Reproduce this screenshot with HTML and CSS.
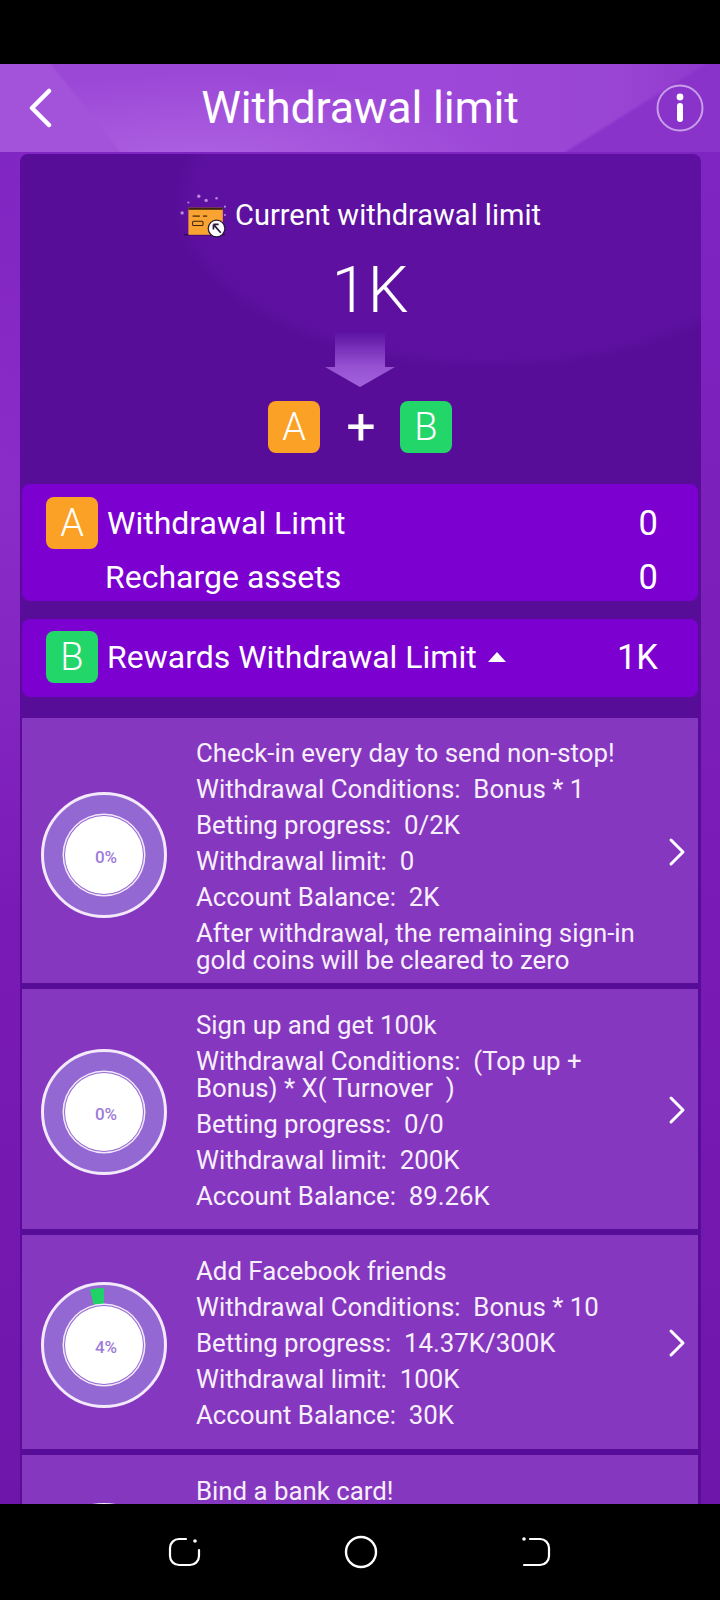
FILE: index.html
```html
<!DOCTYPE html>
<html lang="en">
<head>
    <meta charset="UTF-8">
    <meta name="viewport" content="width=device-width, initial-scale=1.0">
    <title>Withdrawal limit</title>
    <link rel="stylesheet" href="styles.css">
</head>
<body>

    <div class="status-bar"></div>

    <main class="app">
        <!-- Title bar -->
        <header class="top-bar">
            <svg class="back-icon" width="26" height="40" viewBox="0 0 26 40">
                <path d="M22 3 L5 20 L22 37" fill="none" stroke="#fff" stroke-width="4.5" stroke-linecap="round" stroke-linejoin="round"/>
            </svg>
            <h1 class="top-title">Withdrawal limit</h1>
            <div class="info-btn">
                <svg width="48" height="48" viewBox="0 0 48 48">
                    <circle cx="24" cy="24" r="22.5" fill="none" stroke="#e6cdf7" stroke-opacity="0.7" stroke-width="2"/>
                    <circle cx="24" cy="13" r="3.4" fill="#fff"/>
                    <rect x="21" y="19" width="6" height="19" rx="3" fill="#fff"/>
                </svg>
            </div>
        </header>

        <section class="panel">
            <!-- Total limit -->
            <div class="hero">
                <div class="hero-label">
                    <svg class="card-icon" width="48" height="46" viewBox="0 0 46 44">
                        <g fill="#b98ae0">
                            <circle cx="19" cy="4" r="1.6"/>
                            <circle cx="26" cy="8" r="1.6"/>
                            <circle cx="36" cy="6" r="1.2"/>
                            <circle cx="9" cy="10" r="1"/>
                            <circle cx="3" cy="20" r="1.6"/>
                            <circle cx="44" cy="14" r="1"/>
                            <circle cx="44" cy="22" r="1"/>
                        </g>
                        <path d="M5 41 H44" stroke="#1b0b2e" stroke-width="1"/>
                        <rect x="9" y="15" width="33" height="26" fill="#f9a332"/>
                        <rect x="9" y="15" width="33" height="2" fill="#3d2310"/>
                        <path d="M13 23 H20 M23 23 H27" stroke="#7a4a14" stroke-width="1.6"/>
                        <rect x="13" y="28" width="10" height="4" rx="1" fill="#f9a332" stroke="#3d2310"/>
                        <circle cx="36" cy="35" r="8" fill="#fff" stroke="#2a1838" stroke-width="1.2"/>
                        <path d="M33 31 L40 39 M33 31 V36 M33 31 H38" stroke="#2a1838" stroke-width="1.6" fill="none"/>
                    </svg>
                    <span>Current withdrawal limit</span>
                </div>
                <div class="hero-value">1K</div>
                <div class="hero-arrow">
                    <svg width="70" height="54" viewBox="0 0 70 54">
                        <defs>
                            <linearGradient id="arrowFill" x1="0" y1="0" x2="0" y2="1">
                                <stop offset="0" stop-color="#5e14a4"/>
                                <stop offset="0.6" stop-color="#9450d0"/>
                                <stop offset="1" stop-color="#a262dc"/>
                            </linearGradient>
                        </defs>
                        <path d="M10 0 H60 V34 H70 L35 54 L0 34 H10 Z" fill="url(#arrowFill)"/>
                    </svg>
                </div>
                <div class="hero-sum">
                    <span class="badge badge-a">A</span>
                    <span class="plus">+</span>
                    <span class="badge badge-b">B</span>
                </div>
            </div>

            <!-- A and B totals -->
            <div class="limit-row limit-row-a">
                <div class="limit-line">
                    <span class="badge badge-a">A</span>
                    <span class="limit-name">Withdrawal Limit</span>
                    <span class="limit-val">0</span>
                </div>
                <div class="limit-line limit-line-sub">
                    <span class="limit-name">Recharge assets</span>
                    <span class="limit-val">0</span>
                </div>
            </div>

            <div class="limit-row limit-row-b">
                <div class="limit-line">
                    <span class="badge badge-b">B</span>
                    <span class="limit-name">Rewards Withdrawal Limit</span>
                    <span class="caret"></span>
                    <span class="limit-val">1K</span>
                </div>
            </div>

            <!-- Reward tasks -->
            <div class="task task-first">
                <div class="ring" style="--p: 0deg"><div class="ring-core">0%</div></div>
                <div class="task-text">
                    <p>Check-in every day to send non-stop!</p>
                    <p>Withdrawal Conditions:&nbsp; Bonus * 1</p>
                    <p>Betting progress:&nbsp; 0/2K</p>
                    <p>Withdrawal limit:&nbsp; 0</p>
                    <p>Account Balance:&nbsp; 2K</p>
                    <p>After withdrawal, the remaining sign-in gold coins will be cleared to zero</p>
                </div>
                <svg class="chevron" width="18" height="30" viewBox="0 0 18 30"><path d="M3 3 L15 15 L3 27" fill="none" stroke="#fff" stroke-width="3" stroke-linecap="round" stroke-linejoin="round"/></svg>
            </div>

            <div class="task">
                <div class="ring" style="--p: 0deg"><div class="ring-core">0%</div></div>
                <div class="task-text">
                    <p>Sign up and get 100k</p>
                    <p>Withdrawal Conditions:&nbsp; (Top up + Bonus) * X( Turnover &nbsp;)</p>
                    <p>Betting progress:&nbsp; 0/0</p>
                    <p>Withdrawal limit:&nbsp; 200K</p>
                    <p>Account Balance:&nbsp; 89.26K</p>
                </div>
                <svg class="chevron" width="18" height="30" viewBox="0 0 18 30"><path d="M3 3 L15 15 L3 27" fill="none" stroke="#fff" stroke-width="3" stroke-linecap="round" stroke-linejoin="round"/></svg>
            </div>

            <div class="task">
                <div class="ring" style="--p: 14.4deg"><div class="ring-core">4%</div></div>
                <div class="task-text">
                    <p>Add Facebook friends</p>
                    <p>Withdrawal Conditions:&nbsp; Bonus * 10</p>
                    <p>Betting progress:&nbsp; 14.37K/300K</p>
                    <p>Withdrawal limit:&nbsp; 100K</p>
                    <p>Account Balance:&nbsp; 30K</p>
                </div>
                <svg class="chevron" width="18" height="30" viewBox="0 0 18 30"><path d="M3 3 L15 15 L3 27" fill="none" stroke="#fff" stroke-width="3" stroke-linecap="round" stroke-linejoin="round"/></svg>
            </div>

            <!-- Last card runs under the nav bar, only the top of it shows -->
            <div class="task task-last">
                <div class="ring" style="--p: 0deg"><div class="ring-core"></div></div>
                <div class="task-text">
                    <p>Bind a bank card!</p>
                </div>
            </div>
        </section>
    </main>

    <!-- Android navigation keys -->
    <nav class="nav-bar">
        <svg width="34" height="32" viewBox="0 0 34 32" fill="none" stroke="#fff" stroke-width="2.2" stroke-linecap="round">
            <path d="M19 3 H12 A9 9 0 0 0 3 12 V20 A9 9 0 0 0 12 29 H23 A9 9 0 0 0 32 20 V14"/>
            <circle cx="28" cy="5" r="1.8" fill="#fff" stroke="none"/>
        </svg>
        <svg width="34" height="34" viewBox="0 0 34 34" fill="none" stroke="#fff" stroke-width="2.4">
            <circle cx="17" cy="17" r="15"/>
        </svg>
        <svg width="32" height="32" viewBox="0 0 32 32" fill="none" stroke="#fff" stroke-width="2.2" stroke-linecap="round">
            <path d="M10 3 H20 A9 9 0 0 1 29 12 V20 A9 9 0 0 1 20 29 H4"/>
            <circle cx="4" cy="3" r="1.8" fill="#fff" stroke="none"/>
        </svg>
    </nav>

</body>
</html>
```

FILE: styles.css
```css
/* Page frame */
* {
    box-sizing: border-box;
}

html,
body {
    margin: 0;
    height: 1600px;
    overflow: hidden;
    background-color: #000;
    font-family: Roboto, "Liberation Sans", sans-serif;
    color: #fff;
}

body {
    display: flex;
    flex-direction: column;
}

.status-bar {
    height: 64px;
    flex-shrink: 0;
}

.app {
    flex: 1;
    min-height: 0;
    overflow: hidden;
    background:
        radial-gradient(ellipse 260px 420px at 0 420px, #8a2cc8 0, rgba(138, 44, 200, 0) 100%),
        linear-gradient(180deg, #7f26c2 0, #7a1ab6 60%, #6f16aa 100%);
}

.nav-bar {
    height: 96px;
    flex-shrink: 0;
    display: flex;
    justify-content: space-between;
    align-items: center;
    padding: 0 168px 0 167px;
}

/* Title bar */
.top-bar {
    height: 88px;
    display: flex;
    align-items: center;
    justify-content: space-between;
    padding: 0 13px 0 27px;
    background:
        linear-gradient(148deg, rgba(138, 51, 203, 0) 372px, #8a33cb 376px),
        linear-gradient(51.5deg, #a253da 0, #a253da 93px, rgba(162, 83, 218, 0) 96px),
        radial-gradient(ellipse 300px 90px at 200px 100px, #ae62e2 0, rgba(174, 98, 226, 0) 100%),
        linear-gradient(90deg, #9a48d6 0, #9d48d8 60%, #9a46d4 85%, #8e38cc 100%);
}

.back-icon {
    flex-shrink: 0;
}

.top-title {
    margin: 0;
    padding-left: 14px;
    font-size: 44.8px;
    font-weight: 400;
    line-height: 1;
    letter-spacing: -0.2px;
}

.info-btn {
    width: 54px;
    display: flex;
    justify-content: center;
}

/* Dark panel */
.panel {
    margin: 2px 19px 0 20px;
    padding: 0 3px 0 2px;
    border-radius: 8px 8px 0 0;
    height: 1400px;
    background:
        radial-gradient(ellipse 320px 166px at 470px 50px, #5e11a0 0, #5e11a0 92%, rgba(94, 17, 160, 0) 100%),
        #570d97;
}

.hero {
    height: 330px;
    padding-top: 38px;
    display: flex;
    flex-direction: column;
    align-items: center;
}

.hero-label {
    display: flex;
    align-items: center;
    gap: 8px;
    height: 46px;
    font-size: 29px;
    font-weight: 400;
}

.hero-value {
    margin-top: 17px;
    padding-left: 20px;
    font-size: 65px;
    font-weight: 300;
    line-height: 70px;
}

.hero-arrow {
    margin-top: 8px;
    height: 54px;
}

.hero-sum {
    margin-top: 14px;
    display: flex;
    align-items: center;
    gap: 24px;
}

.plus {
    width: 30px;
    margin-left: 2px;
    font-size: 52px;
    font-weight: 400;
    line-height: 52px;
    text-align: center;
}

.badge {
    width: 52px;
    height: 52px;
    flex-shrink: 0;
    border-radius: 8px;
    display: flex;
    align-items: center;
    justify-content: center;
    font-size: 38px;
    font-weight: 300;
}

.badge-a {
    background-color: #fba125;
}

.badge-b {
    background-color: #22d66a;
}

/* A and B rows */
.limit-row {
    background-color: #7c00d0;
    border-radius: 8px;
    padding: 0 40px 0 24px;
}

.limit-row-a {
    height: 117px;
    padding-top: 13px;
}

.limit-row-b {
    margin-top: 18px;
    height: 78px;
    padding-top: 12px;
}

.limit-line {
    display: flex;
    align-items: center;
    height: 52px;
    gap: 9px;
    font-size: 32px;
    font-weight: 400;
}

.limit-line-sub {
    height: 34px;
    margin-top: 11px;
    padding-left: 59px;
}

.limit-val {
    margin-left: auto;
    font-size: 34.5px;
}

.caret {
    width: 0;
    height: 0;
    margin-left: 2px;
    border-left: 9px solid transparent;
    border-right: 9px solid transparent;
    border-bottom: 10px solid #fff;
}

/* Reward task cards */
.task {
    margin-top: 6px;
    display: flex;
    align-items: center;
    padding: 23px 12px 20px 19px;
    background-color: #8637bf;
}

.limit-row-b + .task {
    margin-top: 21px;
}

.task-first {
    padding-top: 22px;
    padding-bottom: 10px;
}

.ring {
    width: 126px;
    height: 126px;
    flex-shrink: 0;
    margin-top: 3px;
    margin-right: 29px;
    padding: 3px;
    display: flex;
    align-items: center;
    justify-content: center;
    border: 3px solid #f3e9fa;
    border-radius: 50%;
    background:
        conic-gradient(from calc(-1 * var(--p)), #1fd166 0 var(--p), #9468d2 0) content-box,
        #9468d2;
}

.task-first .ring {
    margin-top: -3px;
}

.task-last {
    align-items: flex-start;
}

.task-last .ring {
    margin-top: 25px;
}

.task-last .task-text {
    margin-top: 1px;
    line-height: 24px;
}

.ring-core {
    width: 78px;
    height: 78px;
    padding: 4px 0 0 4px;
    display: flex;
    align-items: center;
    justify-content: center;
    border-radius: 50%;
    background-color: #fff;
    box-shadow: 0 0 0 1px #9468d2, 0 0 0 2.5px #f3e9fa;
    color: #a07bd8;
    font-size: 17px;
    font-weight: 500;
}

.task-text {
    flex: 1;
    padding-right: 8px;
    font-size: 25.8px;
    line-height: 26.5px;
    font-weight: 400;
    color: #f7effc;
}

.task-text p {
    margin: 0 0 9.5px;
}

.task-text p:last-child {
    margin-bottom: 0;
}

.chevron {
    flex-shrink: 0;
    margin-top: -1px;
}

.task-first .chevron {
    margin-top: -9px;
}
```
